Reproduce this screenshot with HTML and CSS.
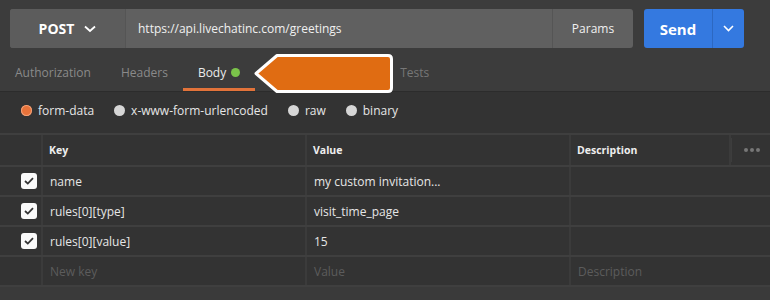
FILE: index.html
```html
<!DOCTYPE html>
<html>
<head>
	<meta charset="utf-8">
	<title>Request</title>
	<link rel="stylesheet" href="styles.css">
</head>
<body>
	<div class="top">
		<div class="bar">
			<div class="url-group">
				<div class="method">
					<span>POST</span>
					<svg width="12" height="8" viewBox="0 0 12 8"><path d="M1 1.5 L6 6 L11 1.5" fill="none" stroke="#fff" stroke-width="1.8"/></svg>
				</div>
				<div class="url">https://api.livechatinc.com/greetings</div>
				<div class="params">Params</div>
			</div>
			<div class="send-group">
				<div class="send">Send</div>
				<div class="split">
					<svg width="11" height="7" viewBox="0 0 11 7"><path d="M1 1 L5.5 5.5 L10 1" fill="none" stroke="#fff" stroke-width="1.6"/></svg>
				</div>
			</div>
		</div>
		<div class="tabs">
			<div class="tab">Authorization</div>
			<div class="tab">Headers</div>
			<div class="tab active">Body <i class="dot"></i></div>
			<div class="tab hidden">Pre-request Script</div>
			<div class="tab dim">Tests</div>
		</div>
		<!-- callout pointing at the Body tab -->
		<svg class="callout" width="142" height="42" viewBox="0 0 142 42">
			<path d="M3 20.5 L24 2.5 L135 2.5 Q138.5 2.5 138.5 6 L138.5 35 Q138.5 38.5 135 38.5 L24 38.5 Z" fill="#e06c12" stroke="#fff" stroke-width="3" stroke-linejoin="round"/>
		</svg>
	</div>

	<div class="modes">
		<label class="mode"><i class="radio on"></i>form-data</label>
		<label class="mode"><i class="radio"></i>x-www-form-urlencoded</label>
		<label class="mode"><i class="radio"></i>raw</label>
		<label class="mode"><i class="radio"></i>binary</label>
	</div>

	<div class="grid">
		<div class="row head">
			<div class="c check"></div>
			<div class="c">Key</div>
			<div class="c">Value</div>
			<div class="c">Description</div>
			<div class="c more"><span class="sep"></span><i></i><i></i><i></i></div>
		</div>
		<div class="row">
			<div class="c check"><span class="box"><svg width="10" height="8" viewBox="0 0 10 8"><path d="M1 4 L3.8 6.6 L9 1.2" fill="none" stroke="#333" stroke-width="1.8"/></svg></span></div>
			<div class="c">name</div>
			<div class="c">my custom invitation...</div>
			<div class="c wide"></div>
		</div>
		<div class="row">
			<div class="c check"><span class="box"><svg width="10" height="8" viewBox="0 0 10 8"><path d="M1 4 L3.8 6.6 L9 1.2" fill="none" stroke="#333" stroke-width="1.8"/></svg></span></div>
			<div class="c">rules[0][type]</div>
			<div class="c">visit_time_page</div>
			<div class="c wide"></div>
		</div>
		<div class="row">
			<div class="c check"><span class="box"><svg width="10" height="8" viewBox="0 0 10 8"><path d="M1 4 L3.8 6.6 L9 1.2" fill="none" stroke="#333" stroke-width="1.8"/></svg></span></div>
			<div class="c">rules[0][value]</div>
			<div class="c">15</div>
			<div class="c wide"></div>
		</div>
		<div class="row new">
			<div class="c check"></div>
			<div class="c">New key</div>
			<div class="c">Value</div>
			<div class="c wide">Description</div>
		</div>
	</div>
	<div class="foot"></div>
</body>
</html>
```

FILE: styles.css
```css
* {
	margin: 0;
	padding: 0;
	box-sizing: border-box;
}
body {
	width: 770px;
	height: 300px;
	overflow: hidden;
	background: #333;
	font-family: "Open Sans", "Liberation Sans", sans-serif;
	color: #e6e6e6;
}

/* request bar + tabs */
.top {
	position: relative;
	background: #3c3c3c;
	border-bottom: 1px solid #2c2c2c;
	padding-top: 9px;
}
.bar {
	display: flex;
	height: 39px;
	padding: 0 10px;
}
.url-group {
	display: flex;
	width: 623px;
	background: #606060;
	border-radius: 3px;
	font-size: 12px;
}
.method {
	display: flex;
	align-items: center;
	justify-content: center;
	gap: 10px;
	width: 116px;
	background: #5c5c5c;
	border-radius: 3px 0 0 3px;
	border-right: 1px solid #555;
	font-size: 14px;
	font-weight: bold;
	color: #fff;
}
.url {
	flex: 1;
	display: flex;
	align-items: center;
	padding-left: 12px;
	color: #f0f0f0;
}
.params {
	display: flex;
	align-items: center;
	justify-content: center;
	width: 81px;
	border-left: 1px solid #555;
	color: #f0f0f0;
}
.send-group {
	display: flex;
	width: 100px;
	margin-left: 11px;
	background: #3479e0;
	border-radius: 3px;
	color: #fff;
}
.send {
	display: flex;
	align-items: center;
	justify-content: center;
	width: 69px;
	border-right: 1px solid #2c68c2;
	font-size: 15px;
	font-weight: bold;
}
.split {
	flex: 1;
	display: flex;
	align-items: center;
	justify-content: center;
}
.tabs {
	display: flex;
	height: 43px;
}
.tab {
	display: flex;
	align-items: center;
	padding: 8px 15px 0;
	font-size: 12px;
	color: #8a8a8a;
	white-space: nowrap;
	border-bottom: 3px solid transparent;
}
.tab.active {
	color: #ececec;
	border-bottom-color: #e2733a;
}
.tab.hidden {
	width: 130px;
	overflow: hidden;
}
.tab.dim {
	color: #777;
}
.dot {
	display: inline-block;
	width: 9px;
	height: 9px;
	margin-left: 5px;
	border-radius: 50%;
	background: #7bc34a;
}
.callout {
	position: absolute;
	left: 253px;
	top: 53px;
}

/* body modes */
.modes {
	display: flex;
	align-items: center;
	height: 41px;
	padding: 0 0 5px 21px;
	font-size: 12px;
	color: #e6e6e6;
}
.mode {
	display: flex;
	align-items: center;
	margin-right: 20px;
}
.radio {
	width: 11px;
	height: 11px;
	margin-right: 6px;
	border-radius: 50%;
	background: #d6d6d6;
}
.radio.on {
	background: #e8733a;
	box-shadow: 0 0 0 1px #f2a27a inset;
}

/* key / value table */
.grid {
	border-top: 2px solid #3f3f3f;
}
.row {
	display: grid;
	grid-template-columns: 43px 264px 264px 160px 39px;
	height: 30px;
	border-bottom: 2px solid #3f3f3f;
	font-size: 12px;
}
.row.head {
	height: 32px;
}
.c {
	display: flex;
	align-items: center;
	padding-left: 7px;
	border-right: 2px solid #3b3b3b;
	white-space: nowrap;
	overflow: hidden;
}
.c.wide {
	grid-column: span 2;
	border-right: 0;
}
.c.check {
	padding-left: 21px;
}
.head .c {
	padding-left: 6px;
	font-size: 10.5px;
	font-weight: bold;
	color: #eee;
}
.head .c.more {
	border-right: 0;
	padding-left: 0;
	gap: 2px;
}
.sep {
	width: 1px;
	height: 24px;
	margin-right: 10px;
	background: #3d3d3d;
}
.more i {
	width: 4px;
	height: 4px;
	border-radius: 50%;
	background: #777;
}
.box {
	display: flex;
	align-items: center;
	justify-content: center;
	width: 16px;
	height: 16px;
	border-radius: 3px;
	background: #fafafa;
}
.new .c {
	color: #5c5c5c;
}
.foot {
	height: 20px;
	background: #3a3a3a;
}
```
